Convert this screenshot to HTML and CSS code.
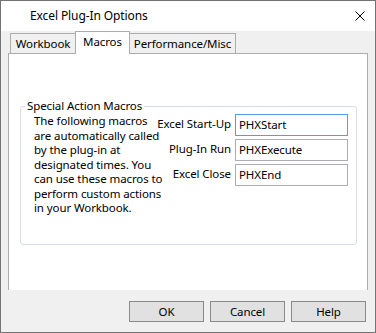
FILE: index.html
```html
<!DOCTYPE html>
<html>
<head>
<meta charset="utf-8">
<link rel="stylesheet" href="styles.css">
</head>
<body>
<div class="window">
  <div class="titlebar">
    <span class="title">Excel Plug-In Options</span>
    <svg class="close" width="10" height="10" viewBox="0 0 10 10"><path d="M0.5 0.5L9.5 9.5M9.5 0.5L0.5 9.5" stroke="#000" stroke-width="1" fill="none"/></svg>
  </div>
  <div class="tabs">
    <div class="tab tab-workbook">Workbook</div>
    <div class="tab tab-macros active">Macros</div>
    <div class="tab tab-perf">Performance/Misc</div>
  </div>
  <div class="panel">
    <fieldset class="group">
      <legend>Special Action Macros</legend>
      <div class="group-body">
        <p class="desc">The following macros<br>are automatically called<br>by the plug-in at<br>designated times. You<br>can use these macros to<br>perform custom actions<br>in your Workbook.</p>
        <div class="fields">
          <label class="lbl">Excel Start-Up</label>
          <div class="input focused">PHXStart</div>
          <label class="lbl">Plug-In Run</label>
          <div class="input">PHXExecute</div>
          <label class="lbl">Excel Close</label>
          <div class="input">PHXEnd</div>
        </div>
      </div>
    </fieldset>
  </div>
  <div class="buttons">
    <div class="btn">OK</div>
    <div class="btn">Cancel</div>
    <div class="btn">Help</div>
  </div>
</div>
</body>
</html>
```

FILE: styles.css
```css
html, body {
  margin: 0;
  padding: 0;
  background: #ffffff;
}

.window {
  width: 376px;
  height: 333px;
  box-sizing: border-box;
  border: 1px solid #737373;
  background: #f0f0f0;
  display: flex;
  flex-direction: column;
  font-family: "Segoe UI", "Noto Sans", sans-serif;
  font-size: 11.5px;
  letter-spacing: -0.1px;
  color: #000;
}

.titlebar {
  height: 30px;
  flex: none;
  background: #ffffff;
  display: flex;
  align-items: center;
  padding: 0 10px 0 29px;
}

.title {
  flex: 1;
  line-height: 16px;
  font-size: 12px;
}

.close {
  display: block;
}

.tabs {
  height: 22px;
  flex: none;
  display: flex;
  align-items: flex-end;
  padding-left: 9px;
  position: relative;
  z-index: 1;
}

.tab {
  box-sizing: border-box;
  height: 20px;
  border: 1px solid #acacac;
  border-bottom: none;
  background: #f0f0f0;
  margin-right: -1px;
  display: flex;
  align-items: center;
  justify-content: center;
  line-height: 16px;
  white-space: nowrap;
}

.tab-workbook { width: 66px; }
.tab-macros { width: 55px; }
.tab-perf { width: 107px; }

.tab.active {
  height: 23px;
  margin-bottom: -1px;
  background: #ffffff;
  position: relative;
  z-index: 2;
  padding-bottom: 3px;
}

.panel {
  height: 237px;
  flex: none;
  box-sizing: border-box;
  margin: 0 7px;
  border: 1px solid #acacac;
  border-bottom: none;
  background: #ffffff;
  display: flex;
  flex-direction: column;
}

.group {
  margin: 44px 10px 0 11px;
  padding: 0 0 0 4px;
  border: 1px solid #d5dfe5;
  border-radius: 3px;
  min-width: 0;
}

.group legend {
  padding: 0 2px;
  line-height: 16px;
}

.group-body {
  height: 130px;
  display: flex;
  align-items: flex-start;
}

.desc {
  flex: none;
  width: 118px;
  margin: 0 0 0 9px;
  line-height: 14.5px;
  white-space: nowrap;
}

.fields {
  flex: none;
  margin-left: auto;
  margin-right: 8px;
  display: grid;
  grid-template-columns: auto 113px;
  grid-auto-rows: 22px;
  column-gap: 4px;
  row-gap: 3px;
  align-items: center;
}

.lbl {
  text-align: right;
  line-height: 16px;
  margin-top: -2px;
  white-space: nowrap;
}

.input {
  box-sizing: border-box;
  height: 22px;
  border: 1px solid #abadb3;
  background: #fff;
  padding-left: 3px;
  line-height: 19px;
  white-space: nowrap;
}

.input.focused {
  border-color: #569de5;
}

.buttons {
  flex: none;
  display: flex;
  justify-content: flex-end;
  gap: 6px;
  margin-top: 11px;
  padding-right: 9px;
}

.btn {
  box-sizing: border-box;
  width: 75px;
  height: 21px;
  border: 1px solid #8a8a8a;
  background: #e1e1e1;
  display: flex;
  align-items: center;
  justify-content: center;
  line-height: 16px;
}
```
